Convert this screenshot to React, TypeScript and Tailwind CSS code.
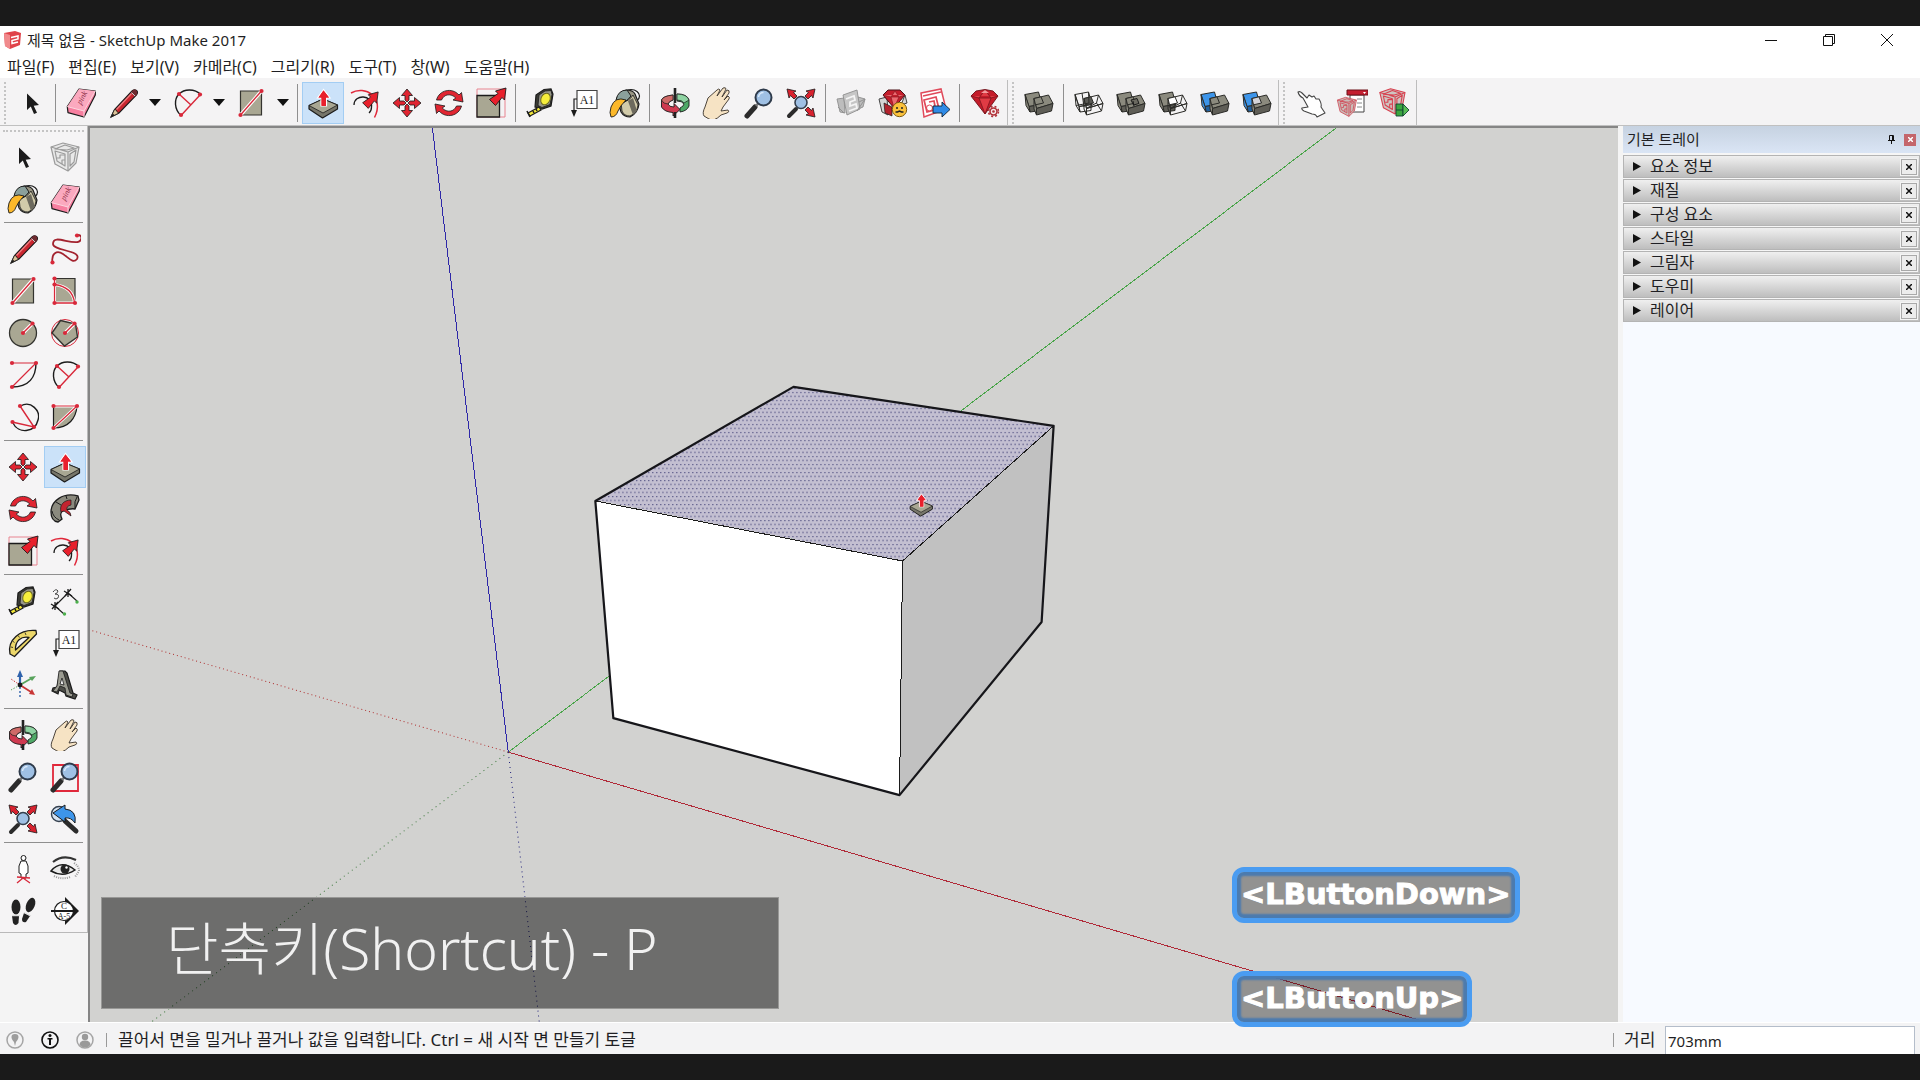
import React, { ReactNode } from "react";

const INK = "#1b1b1b";
const RED = "#d8283a";
const STONE = "#a9a793";
const BLOCK = "#8b8a7e";
const BLUE = "#3d95ea";

const Dot = ({ x, y }: { x: number; y: number }) => <circle cx={x} cy={y} r="2.1" fill={RED} />;

const Magnifier = () => (
  <>
    <path d="M4 29 12 20" stroke="#2b2b2b" strokeWidth="5" strokeLinecap="round" />
    <path d="m13 19 3-3.500" stroke="#777" strokeWidth="2.500" />
    <circle cx="20.500" cy="10.500" r="8" fill="#9fc0e4" stroke="#2e3a4a" strokeWidth="2" />
    <path d="M15.500 10a5 5 0 0 1 5-4.500" stroke="#dbeafa" strokeWidth="1.500" fill="none" />
  </>
);

const FatArrow = () => (
  <path
    d="M31 1 20.500 4l2.500 2.500-8.500 6 6 6 6.500-8 2.500 2.500z"
    fill="#e8202c"
    stroke={INK}
    strokeWidth=".9"
  />
);

interface SolidProps {
  back: string;
  front: string;
  core: string;
}

const Solids = ({ back, front, core }: SolidProps) => {
  const side = (c: string) => (c === "none" ? "none" : c === BLUE ? "#20609f" : "#5f5e57");
  return (
    <g stroke="#2b2b28" strokeWidth="1" strokeLinejoin="round">
      <path d="M2 7.500 15.500 5l3.500 12.500-13 2z" fill={back} />
      <path d="m6 19.500 12-2v6L7 25z" fill={side(back)} />
      <path d="m2 7.500 1 11L7 25l-1-5.500z" fill={back} />
      <path d="M11 11.500 25.500 8l4.500 8.500-16.500 5z" fill={front} />
      <path d="M13.500 21.500 30 16.500 28.500 24l-15 4z" fill={side(front)} />
      <path d="m11 11.500 2.500 10v6.500l-2.500-6z" fill={front} />
      <path d="m11 11.500 7-1.700 2.500 6.200-8 1.800z" fill={core} />
      {front === "none" && <path d="m25.500 8-2 8 5 8M13 21.500l10.500-5.500" fill="none" />}
      {back === "none" && <path d="M3 18.500 16 16l-.5-11M9 6l2 14" fill="none" />}
    </g>
  );
};

const Cube = ({ line, fill }: { line: string; fill: string }) => (
  <g stroke={line} strokeWidth="1.200" strokeLinejoin="round">
    <path d="M2 6 14 2l16 4-3 16-8 8L6 23z" fill={fill} />
    <path d="m2 6 17 5 11-5M19 11v19M6 8l10-4 9 3-7 2zM6 10l10 3v12l-8-5z" fill="none" />
    <path d="M8 17h3v-3h5M13 23v-4h3M21 13l6-4-2 12-4 4z" fill="none" />
  </g>
);

const art: Record<string, ReactNode> = {
  select: <path d="M12 6.500V23l3.800-3.400L19 27l3-1.300-3.300-7L24 18z" fill={INK} />,
  eraser: (
    <>
      <path d="M14 2 30.300 4v4L19 30 3 25.600 2.300 19.600z" fill="#f77fa0" stroke={INK} strokeWidth="1.200" strokeLinejoin="round" />
      <path d="M14 2 30.300 4 19 24 2.300 19.600z" fill="#fba9bf" />
      <path d="M2.300 19.600 19 24 30.300 4M19 24v6" fill="none" stroke="#fbd6df" />
      <text x="16" y="18" fontSize="8" fontStyle="italic" transform="rotate(-62 16 18)" fill="#8d2c44" fontFamily="Liberation Serif">
        pink
      </text>
    </>
  ),
  pencil: (
    <>
      <path d="M4 30 7.500 22.500 25 4q2.500-2 4.500-.5t0 4.500L12 26z" fill="#c9262f" stroke={INK} strokeWidth="1.100" />
      <path d="M4 30 7.500 22.500l1.800.5.700 1.800 2 1.200z" fill="#dcc49a" stroke={INK} strokeWidth=".8" />
      <path d="m4 30 1.800-3.500 1.700 1.800z" fill={INK} />
      <path d="M9.500 22.500 24.500 6.500" stroke="#ef7d7f" strokeWidth="1.200" />
      <path d="m24 5.500 3.800 4L29.500 8q1.500-2.500 0-4.500t-4.500.5z" fill="#6e2b30" />
      <path d="m24.500 5.500 3.500 3.500" stroke="#ccc" />
    </>
  ),
  arc: (
    <>
      <path d="M10 28.500C3 22 3 12 8 7s15-6 22 .5" fill="none" stroke={INK} strokeWidth="1.400" />
      <path d="M10 28.500 29 8M8 7l12 11" stroke={RED} strokeWidth="1.400" />
      <Dot x={10} y={28} /><Dot x={8} y={7} /><Dot x={29} y={7.5} />
    </>
  ),
  arcCenter: (
    <>
      <path d="M29 4C29 18 22 28 5 28" fill="none" stroke={INK} strokeWidth="1.400" />
      <path d="M4 4h25L5 28" fill="none" stroke={RED} strokeWidth="1.200" />
      <Dot x={5} y={4} /><Dot x={29} y={4} /><Dot x={5} y={28} />
    </>
  ),
  arc3: (
    <>
      <path d="M13.500 5C24-1 34 10 31 19c-3 13-20 14-25 3" fill="none" stroke={INK} strokeWidth="1.400" />
      <path d="M13 5 27 26 5 21" fill="none" stroke={RED} strokeWidth="1.400" />
      <Dot x={13} y={5} /><Dot x={27} y={26} /><Dot x={5.5} y={21} />
    </>
  ),
  pie: (
    <>
      <path d="M4.500 5H28C27 17 20 27 4.500 27z" fill={STONE} stroke={INK} strokeWidth="1.200" />
      <path d="M4.500 27 28 5H4.500" fill="none" stroke="#fff" strokeWidth="3" />
      <path d="M4.500 27 28 5H4.500" fill="none" stroke={RED} strokeWidth="1.200" />
      <Dot x={4.5} y={5} /><Dot x={28} y={5} /><Dot x={4.5} y={27} />
    </>
  ),
  rect: (
    <>
      <path d="M5.500 4h21v24h-21z" fill={STONE} stroke="#33332f" strokeWidth="1.200" />
      <path d="m5.500 28 21-24" stroke="#fff" strokeWidth="3.500" />
      <path d="m5.500 28 21-24" stroke={RED} strokeWidth="1.300" />
      <Dot x={5.5} y={28} /><Dot x={26.5} y={4} />
    </>
  ),
  rotRect: (
    <>
      <path d="M5.500 3.500H26V28H5.500z" fill={STONE} stroke="#33332f" strokeWidth="1.200" />
      <path d="M5.500 9.500Q24 12 25.500 28h-20V3.500" fill="none" stroke="#fff" strokeWidth="3" />
      <path d="M5.500 9.500Q24 12 25.500 28h-20V3.500" fill="none" stroke={RED} strokeWidth="1.300" />
      <Dot x={5.5} y={3.5} /><Dot x={5.5} y={9.5} /><Dot x={5.5} y={28} /><Dot x={26} y={28} />
    </>
  ),
  circle: (
    <>
      <circle cx="16" cy="16" r="13.500" fill={STONE} stroke="#33332f" strokeWidth="1.300" />
      <path d="m16 16 9.500-9.500" stroke="#fff" strokeWidth="3.500" />
      <path d="m16 16 9.500-9.500" stroke={RED} strokeWidth="1.400" />
      <Dot x={16} y={16} /><Dot x={25.5} y={6.5} />
    </>
  ),
  polygon: (
    <>
      <circle cx="16" cy="16" r="13.500" fill="none" stroke={RED} />
      <path d="m11.500 3.500 15 3.500 2 13-13 9L3 16z" fill={STONE} stroke="#33332f" strokeWidth="1.400" />
      <path d="m16 16 9.500-9.500" stroke="#fff" strokeWidth="3.500" />
      <path d="m16 16 9.500-9.500" stroke={RED} strokeWidth="1.400" />
      <Dot x={16} y={16} /><Dot x={25.5} y={6.5} />
    </>
  ),
  freehand: (
    <>
      <path
        d="M3.500 29.500C2 20 8 17 14 21s10 10 14 5C33 17 4 18 4 11 4 1 20 11 29 9c5-2 4-7 0-7"
        fill="none"
        stroke="#a3232f"
        strokeWidth="1.800"
      />
      <Dot x={3.5} y={29.5} /><Dot x={28} y={2.5} />
    </>
  ),
  pushPull: (
    <>
      <path d="M2 18.500 16 12l14.500 6v4L15.500 31 2 22z" fill="#77766a" stroke={INK} strokeWidth="1.200" strokeLinejoin="round" />
      <path d="M2 18.500 16 12l14.500 6L16 26z" fill={STONE} stroke={INK} strokeWidth=".8" />
      <path d="M16.500 2.500 10.500 11H14v8h5.500v-8h3.500z" fill="#e8202c" stroke="#fff" strokeWidth="1.200" />
      <path d="M16.500 3.500 11.500 10.500h3V19H19v-8.500h3z" fill="#e8202c" />
    </>
  ),
  offset: (
    <>
      <path d="M2 6C16-2 36 10 25.500 30.500" fill="none" stroke="#e0283a" strokeWidth="1.500" />
      <path d="M5 18C5 7 24 7 22.500 20q0 4-2.500 6" fill="none" stroke={INK} strokeWidth="1.300" />
      <g transform="translate(0 4) scale(.94)"><FatArrow /></g>
    </>
  ),
  move: (
    <path
      d="m16 2 5.500 6.500H18V13l-2 2-2-2V8.500h-3.500zM30 16l-6.500 5.500V18H19l-2-2 2-2h4.500v-3.500zM16 30l-5.500-6.500H14V19l2-2 2 2v4.500h3.500zM2 16l6.500-5.500V14H13l2 2-2 2H8.500v3.500z"
      fill="#e02531"
      stroke={INK}
      strokeWidth=".8"
    />
  ),
  rotate: (
    <g fill="#e02531" stroke={INK} strokeWidth=".8" strokeLinejoin="round">
      <path d="M3.500 13C6 3 19 0 26 8l2.500-2.500L30 15l-10-2 2.800-2C18 6 11 7 8.500 13z" />
      <path d="M28.500 19C26 29 13 32 6 24l-2.500 2.500L2 17l10 2-2.800 2c4.800 5 11.800 4 14.300-2z" />
    </g>
  ),
  scale: (
    <>
      <path d="M2 2h28v28H2z" fill="none" stroke="#e88490" />
      <path d="M2 8.500h22.500V30H2z" fill={STONE} stroke={INK} strokeWidth="1.300" />
      <FatArrow />
    </>
  ),
  followMe: (
    <>
      <path d="M29 3C14-1 2 8 2 19q0 9 7 10l4-3q-3-6 1-8 8-3 12-2l4-9z" fill="#8b8a7e" stroke={INK} strokeWidth="1.300" />
      <path d="M3 18q1 6 7 9M7 9l5 3M17 3l1 3M28 4q-3 4-2 11" stroke={INK} fill="none" />
      <path d="M22 7C15 7 10 12 12 19l3-1 7 5q0-4-4-6-1-4 4-5z" fill="#c3242f" stroke={INK} strokeWidth=".7" />
    </>
  ),
  tape: (
    <>
      <path d="m11 8 8-5.500L26 2l2 5-2 12-9 3-7-2z" fill="#3a3a34" stroke={INK} strokeWidth="1.200" />
      <path d="m14 8 6-4 6-.5 1 4-2 10-8 3-4-2z" fill="#97968b" stroke={INK} strokeWidth=".8" />
      <ellipse cx="20.500" cy="12" rx="4.500" ry="6" transform="rotate(25 20.500 12)" fill="#f6ee3c" stroke="#6b6820" />
      <path d="m3 26 11-6 2 3-11 6z" fill="#f2e838" stroke={INK} strokeWidth="1.200" />
      <path d="m2 24 3 6M8 24l1 2M11 22l1 2" stroke={INK} strokeWidth="1.600" />
    </>
  ),
  text: (
    <>
      <path d="M10 3.500h20v18H10z" fill="#fff" stroke="#444" strokeWidth="1.200" />
      <path d="M10 12H7v13" fill="none" stroke={INK} strokeWidth="1.200" />
      <path d="M4 23h6l-3 7z" fill={INK} />
      <text x="20" y="16.500" fontSize="12" textAnchor="middle" fill="#222" fontFamily="Liberation Serif">A1</text>
    </>
  ),
  paint: (
    <>
      <ellipse cx="22" cy="9" rx="8.500" ry="6.500" fill="none" stroke={INK} strokeWidth="1.200" />
      <path d="m8 11 9-8q7 0 9 4l4 10q-1 9-9 13-6 0-9-5z" fill="#9a9684" stroke={INK} strokeWidth="1.200" />
      <path d="M12 15q8 0 12-7l5 10q-1 8-8 11-6 0-8-5z" fill="#d2cbaa" stroke={INK} strokeWidth=".8" />
      <path d="m19 14 5 14 4-4-4-13z" fill="#6d6a5e" />
      <path d="M7 13q2-10 11-10l4 6q-6 8-12 7z" fill="#8ba09c" stroke={INK} />
      <path d="M17 13Q6 9 2 20q-2 6 0 10 5 0 7-6 2-5 8-11z" fill="#fcb82a" stroke={INK} strokeWidth=".9" />
    </>
  ),
  dimension: (
    <>
      <path d="m6 21 13-13M6 21l9 8M19 8l9 8" stroke={INK} fill="none" strokeWidth="1.100" />
      <path d="m2 19 8 5M3 24l6-7M6 17v8M15 6l8 5M16 11l6-7M19 4v8" stroke={INK} strokeWidth="1.300" />
      <circle cx="15.500" cy="29" r="1.700" fill="#4cb04c" /><circle cx="28" cy="17" r="1.700" fill="#4cb04c" />
      <path d="M4 7q3-4 5-1-1 3-3 3 5 0 3 4-2 2-4 0" fill="none" stroke="#444" />
    </>
  ),
  protractor: (
    <>
      <path
        fillRule="evenodd"
        d="M29 3.500C13 2 0 13 3 27l4.500 2.500L29.500 7zM22 10.500C14 9 8 14 8.500 23z"
        fill="#ecd76a"
        stroke={INK}
        strokeWidth="1.300"
        strokeLinejoin="round"
      />
      <path d="m4 20 2 .5M5.500 14l2 1.500M11 8.500l1.500 2M18 5.500l1 2.500" stroke={INK} strokeWidth=".8" />
    </>
  ),
  axes: (
    <>
      <path d="m13 16 12-7" stroke="#58a35c" strokeWidth="1.800" /><path d="m29 7-7 1 3 4z" fill="#58a35c" />
      <path d="m13 16 11 7" stroke="#c83636" strokeWidth="1.800" /><path d="m28 26-6-1 3-5z" fill="#c83636" />
      <path d="M13 16V6" stroke="#2f62ac" strokeWidth="2.200" /><path d="m13 1-3 7h6z" fill="#2f62ac" />
      <path d="m13 16-9-6" stroke="#c83636" strokeDasharray="1.500 1.500" />
      <path d="m13 16-9 5" stroke="#58a35c" strokeDasharray="1.500 1.500" />
      <path d="M13 18v10" stroke="#2f62ac" strokeWidth="1.400" strokeDasharray="2 2" />
      <circle cx="13" cy="16" r="2.400" fill={INK} />
    </>
  ),
  text3d: (
    <>
      <path d="M11 2h5l2 2 6 20 4 2-2 4-9-3-1-3-6-3-1 4-6-3 1-3 4-1z" fill="#4d4d48" stroke={INK} strokeWidth="1.200" />
      <path d="M10 2h4l7 22 3 1-1 3-6-2-1-7-5-2-3 6-4-1 4-5z" fill="#9a9a90" stroke={INK} strokeWidth=".8" />
      <path d="m13 9 2 7-4-1z" fill="#f4f3f4" stroke={INK} strokeWidth=".8" />
    </>
  ),
  orbit: (
    <>
      <path d="M14 8Q4 9 2.500 13v7q3 5 11.500 5.500V29l7-6.500-6-6V20q-5 0-6-3 1-3 5-4z" fill="#cf3a50" stroke={INK} strokeWidth=".9" />
      <path d="M14 8Q4 9 2.500 13q1.500 4 6.500 4 1-3 5-4z" fill="#cf6a68" stroke={INK} strokeWidth=".7" />
      <path d="M18 7q10 0 12 6v6q-2 5-9 6v-4q4-2 4-4-2-3-7-3z" fill="#4fa867" stroke={INK} strokeWidth=".9" />
      <path d="M18 7q10 0 12 6l-5 3q-2-3-7-3z" fill="#8ed3a2" stroke={INK} strokeWidth=".7" />
      <path d="M16 1v15M16 25v6" stroke="#222" strokeWidth="2.600" />
    </>
  ),
  pan: (
    <path
      d="M3 30q-2-3 1-9l3-9L16 4q2-2 3 0l-3 6 6-8q3-1 3 1l-4 8 5-7q3 0 2 3l-5 7 4-4q2 1 1 3l-6 8-2 4 7-1q2 2-1 3l-6 2q-7 7-12 4z"
      transform="translate(0 -1)"
      fill="#f6e3c4"
      stroke="#3a322a"
      strokeWidth=".9"
      strokeLinejoin="round"
    />
  ),
  zoom: <Magnifier />,
  zoomWindow: (
    <>
      <path d="M4 4h25v26H4z" fill="none" stroke="#e0283a" strokeWidth="1.800" />
      <Magnifier />
    </>
  ),
  zoomExtents: (
    <>
      <path d="m4 29 7-7" stroke="#2b2b2b" strokeWidth="4" strokeLinecap="round" />
      <circle cx="16" cy="15.500" r="6" fill="#9fc0e4" stroke="#35404e" strokeWidth="1.600" />
      <g fill="#d8222f" stroke={INK} strokeWidth=".8">
        <path d="m2 2 9 2-2.500 1.500L12 9l-3 3-3.500-3.500L4 11z" />
        <path d="m30 2-9 2 2.500 1.500L20 9l3 3 3.500-3.500L28 11z" />
        <path d="m30 30-9-2 2.500-1.500L20 23l3-3 3.500 3.500L28 21z" />
      </g>
    </>
  ),
  previous: (
    <>
      <circle cx="10" cy="11" r="7.500" fill="#d4e2f2" stroke="#35404e" strokeWidth="1.400" />
      <path d="m16 18 11 10" stroke="#2b2b2b" strokeWidth="5" strokeLinecap="round" />
      <path d="m4 10 12-8v4q12 1 10 14-4-6-10-5v4z" fill="#3d95ea" stroke={INK} />
    </>
  ),
  camera: (
    <>
      <circle cx="16.500" cy="5" r="2.500" fill="#fff" stroke={INK} />
      <path d="M14 8h5l2 5v7l-2 1v4h-5v-4l-2-1v-7z" fill="#fff" stroke={INK} />
      <path d="m10 30 6-5 7 5M10 24l13 1" fill="none" stroke={RED} strokeWidth="1.300" />
    </>
  ),
  look: (
    <>
      <path d="M4 9Q14 1 27 7" fill="none" stroke="#333" strokeWidth="2.200" />
      <path d="M2 18q10-12 24-1-12 8-24 1z" fill="#e8e8e8" stroke={INK} strokeWidth="1.500" />
      <circle cx="16" cy="16" r="4.500" fill="#222" /><circle cx="17.500" cy="14.500" r="1.200" fill="#fff" />
      <path d="M25 10q5 3 5 8l-4 6M5 23q8 4 16 1" fill="none" stroke="#999" strokeDasharray="1 1.200" strokeWidth="2" />
    </>
  ),
  walk: (
    <g fill="#222">
      <ellipse cx="9" cy="12" rx="4.500" ry="7.500" /><path d="M5 21h7l-.5 7q-3 4-5.500 0z" />
      <ellipse cx="23.500" cy="10" rx="4.300" ry="7.500" transform="rotate(22 23.500 10)" />
      <path d="m17 18 6 3-4 6q-4 1-4-3z" />
      <path d="M5 20.500h8M17 17.500l7 3.500" stroke="#ddd" strokeWidth="1.300" />
    </g>
  ),
  section: (
    <>
      <path d="m16 2 14 14-14 14z" fill={INK} />
      <circle cx="15" cy="16" r="9.500" fill="#fff" stroke={INK} strokeWidth="1.200" />
      <path d="M2 16h26" stroke={INK} strokeWidth="2" />
      <text x="15" y="14" fontSize="9" textAnchor="middle" fill={INK} fontFamily="Liberation Serif">C</text>
      <text x="15" y="24" fontSize="8" textAnchor="middle" fill={INK} fontFamily="Liberation Serif">A-5</text>
    </>
  ),
  component: <Cube line="#9b9b9b" fill="#e9e9e9" />,
  warehouse: (
    <g stroke="#8f8f8f" strokeWidth=".9">
      <path d="m2 12 7-1 1 15-5-1zM30 12l-7-2v12l5-2z" fill="#bdbdbd" />
      <path d="m8 8 14-5 3 19-13 6z" fill="#c6c6c6" />
      <path d="m11 12 8-3 1 4-5 2v4l6-2 1 4-8 3" fill="none" stroke="#f4f4f4" strokeWidth="1.800" />
      <path d="m3 20 6 6M22 24l8-12-6 3" />
    </g>
  ),
  extensions: (
    <>
      <path d="m2 12 8-2 1 18-6-3zM28 8l2 8-6 2z" fill="#d5d5d5" stroke="#444" />
      <path d="m6 8 5-5h12l5 5-11 13z" fill="#c41e2c" stroke="#4b1016" />
      <path d="m6 8 8 2 4-6 4 6 6-2M14 10l3 11 5-11z" fill="#ec6a70" stroke="#8d1721" strokeWidth=".7" />
      <path d="m7 16 8 4v9l-7-3z" fill="#b3222d" stroke={INK} strokeWidth=".7" />
      <circle cx="22.500" cy="22.500" r="7.200" fill="#fcc23b" stroke="#7a5a10" />
      <path d="M20 20v2M25 20v2M18.500 25h2l2-1 2 1h2" stroke="#222" strokeWidth="1.500" fill="none" />
    </>
  ),
  layout: (
    <>
      <path d="m2 6 20-4 5 20-22 8z" fill="#fff" stroke="#e0495a" strokeWidth="1.500" />
      <path d="m4 9 18-4M5 13l12-3 3 12-12 3zM10 15l5-1 1 5" fill="none" stroke="#e0495a" strokeWidth="1.700" />
      <circle cx="10.500" cy="21" r="3" fill="none" stroke="#e0495a" />
      <path d="M14 19h9v-4l8 7.500L23 30v-4h-9z" fill="#2f8ae6" stroke="#123" strokeWidth=".9" />
    </>
  ),
  ruby: (
    <>
      <path d="m2 9 5-5 9-1.500L24 4l5 5-13 18z" fill="#c41c2a" stroke="#6d1019" strokeWidth=".9" />
      <path d="m2 9 8 2 6-8 6 8 7-2M10 11h12l-6 16z" fill="#e03b44" stroke="#7d141d" strokeWidth=".8" />
      <path d="m12 6 4-3 4 3z" fill="#f39a9c" />
      <circle cx="24.500" cy="24.500" r="3.500" fill="#f6e6e7" stroke="#b03038" strokeWidth="1.600" />
      <circle cx="24.500" cy="24.500" r="5" fill="none" stroke="#b03038" strokeWidth="1.500" strokeDasharray="2 2" />
      <circle cx="24.500" cy="24.500" r="1.300" fill="#b03038" />
    </>
  ),
  outer: <Solids back={BLOCK} front={BLOCK} core={BLOCK} />,
  intersect: <Solids back="none" front="none" core="#5a5a55" />,
  union: (
    <>
      <Solids back={BLOCK} front={BLOCK} core={BLOCK} />
      <path d="m16 13 6-1.500 2 5-5.500 1.500zM18 14l1 5" stroke={INK} fill="#6b6a61" />
    </>
  ),
  subtract: <Solids back={BLOCK} front="none" core="#fff" />,
  trim: <Solids back={BLUE} front={BLOCK} core={BLOCK} />,
  split: <Solids back={BLUE} front={BLOCK} core="#d4d4d8" />,
  interact: (
    <path
      d="M4 5q2-1 4 1l5 5 2-3 3 2 2-1 2 3 3 0q3 5 2 8l4 6-8 4q-1-3-5-3l-8-3q-3-2-2-3l6-1-5-9q-4-2-5-6z"
      fill="#fff"
      stroke="#444"
      strokeWidth="1.100"
      strokeLinejoin="round"
    />
  ),
  options: (
    <>
      <path d="M14 8h14v17H14z" fill="#fff" stroke="#444" />
      <path d="M21 12h5M21 16h5M21 20h5" stroke="#888" />
      <path d="M11 3h21v5H11z" fill="#c31f30" stroke="#6d1019" />
      <path d="m27 5 3 0-1.500 2z" fill="#fff" />
      <g transform="translate(0 9) scale(.68)"><Cube line="#d24a58" fill="#c9bcb8" /></g>
    </>
  ),
  attributes: (
    <>
      <g transform="scale(.9)"><Cube line="#d8404f" fill="#cfc4c1" /></g>
      <path d="M18 17h7v12h-7z" fill="#3ba63f" stroke="#143" strokeWidth=".9" />
      <path d="M18 23h7M25 17l6 6-6 6z" fill="#57bd55" stroke="#143" strokeWidth=".9" />
    </>
  ),
};

const Tool = ({ name, active = false }: { name: string; active?: boolean }) => (
  <button
    type="button"
    aria-label={name}
    aria-pressed={active}
    className={`flex size-[42px] shrink-0 items-center justify-center border ${
      active ? "border-[#a3cdf3] bg-[#cbe2f9]" : "border-transparent"
    }`}
  >
    <svg viewBox="0 0 32 32" className="size-8" fill="none">{art[name]}</svg>
  </button>
);

const SplitTool = ({ name }: { name: string }) => (
  <div className="flex w-16 shrink-0 items-center">
    <Tool name={name} />
    <button type="button" aria-label={`${name} menu`} className="flex h-10 w-6 items-center justify-center">
      <svg viewBox="0 0 12 7" className="h-[7px] w-3"><path d="M0 0h12L6 7z" fill="#111" /></svg>
    </button>
  </div>
);

const Divider = () => <div className="mr-1 ml-[3px] h-[38px] w-px shrink-0 bg-[#8f8f8f]" />;
const Grip = () => <div className="mx-1 h-[42px] w-0 shrink-0 border-l-2 border-dotted border-[#c4c4c4]" />;

const menus = ["파일(F)", "편집(E)", "보기(V)", "카메라(C)", "그리기(R)", "도구(T)", "창(W)", "도움말(H)"];
const trays = ["요소 정보", "재질", "구성 요소", "스타일", "그림자", "도우미", "레이어"];

const palette = [
  ["select", "component", "paint", "eraser"],
  ["pencil", "freehand", "rect", "rotRect", "circle", "polygon", "arcCenter", "arc", "arc3", "pie"],
  ["move", "pushPull", "rotate", "followMe", "scale", "offset"],
  ["tape", "dimension", "protractor", "text", "axes", "text3d"],
  ["orbit", "pan", "zoom", "zoomWindow", "zoomExtents", "previous"],
  ["camera", "look", "walk", "section"],
];

const TitleBar = () => (
  <header className="bg-white">
    <div className="flex h-7 items-center pl-1">
      <svg viewBox="0 0 18 20" className="mr-[5px] h-5 w-[18px]">
        <path d="M0 3 11 1l6 2-1 12-10 4-5-3z" fill="#e0434a" />
        <path d="m0 3 6 2v14l-5-3z" fill="#f08a8c" />
        <path d="M7 7.500 14 6v3L8 10.500v3l6-1.500" stroke="#fff" strokeWidth="1.500" fill="none" />
      </svg>
      <h1 className="text-[15px]">제목 없음 - SketchUp Make 2017</h1>
      <div className="ml-auto flex text-[#111]">
        <button type="button" aria-label="Minimize" className="flex h-7 w-[58px] items-center justify-center">
          <svg viewBox="0 0 12 12" className="size-3"><path d="M0 6.500h12" stroke="currentColor" /></svg>
        </button>
        <button type="button" aria-label="Restore" className="flex h-7 w-[58px] items-center justify-center">
          <svg viewBox="0 0 12 12" className="size-3" fill="none" stroke="currentColor">
            <path d="M.5 2.500h9v9h-9zM2.500 2.500v-2h9v9h-2" />
          </svg>
        </button>
        <button type="button" aria-label="Close" className="mr-1 flex h-7 w-[58px] items-center justify-center">
          <svg viewBox="0 0 12 12" className="size-3"><path d="m0 0 12 12M12 0 0 12" stroke="currentColor" /></svg>
        </button>
      </div>
    </div>
    <nav className="flex h-6 items-center gap-[14px] pt-[2px] pl-[7px] text-base">
      {menus.map((m) => (
        <button type="button" key={m}>{m}</button>
      ))}
    </nav>
  </header>
);

const TopBar = () => (
  <div className="flex h-12 items-center border-b border-[#c0c0c0] bg-[#f4f3f4] pt-[2px]">
    <div className="flex h-full items-center border-r border-[#bdbdbd] pr-px">
      <Grip />
      <Tool name="select" />
      <Divider />
      <Tool name="eraser" />
      <SplitTool name="pencil" />
      <SplitTool name="arc" />
      <SplitTool name="rect" />
      <Divider />
      <Tool name="pushPull" active />
      {["offset", "move", "rotate", "scale"].map((n) => <Tool key={n} name={n} />)}
      <Divider />
      {["tape", "text", "paint"].map((n) => <Tool key={n} name={n} />)}
      <Divider />
      {["orbit", "pan", "zoom", "zoomExtents"].map((n) => <Tool key={n} name={n} />)}
      <Divider />
      {["warehouse", "extensions", "layout"].map((n) => <Tool key={n} name={n} />)}
      <Divider />
      <Tool name="ruby" />
    </div>
    <div className="flex h-full items-center border-r border-[#bdbdbd]">
      <Grip />
      <Tool name="outer" />
      <Divider />
      {["intersect", "union", "subtract", "trim", "split"].map((n) => <Tool key={n} name={n} />)}
    </div>
    <div className="flex h-full items-center border-r border-[#bdbdbd] pr-px">
      <Grip />
      {["interact", "options", "attributes"].map((n) => <Tool key={n} name={n} />)}
    </div>
  </div>
);

const Palette = () => (
  <aside className="w-[88px] shrink-0 bg-[#f4f4f4]">
    <div className="border-r border-b border-[#b9b9b9] bg-[#f5f4f5] px-[2px] pt-1">
      <div className="mx-px mb-1 h-[2px] border-t-2 border-dotted border-[#c4c4c4]" />
      {palette.map((group, i) => (
        <div key={group[0]}>
          {i > 0 && <div className="mx-[2px] mt-[2px] mb-[5px] h-px bg-[#8f8f8f]" />}
          <div className="grid grid-cols-[42px_42px]">
            {group.map((n) => <Tool key={n} name={n} active={n === "pushPull"} />)}
          </div>
        </div>
      ))}
    </div>
  </aside>
);

const Key = ({ children }: { children: ReactNode }) => (
  <kbd className="flex h-14 items-center rounded-xl border-[5px] border-[#4a9cf1] bg-black/30 px-1 pb-[2px] font-['DejaVu_Sans',sans-serif] text-[29px] leading-8 font-bold text-white shadow-[inset_0_0_2px_4px_#4b7baf] [-webkit-text-stroke:1px_white]">
    {children}
  </kbd>
);

const Model = () => (
  <svg viewBox="90 128 1527 894" preserveAspectRatio="xMidYMid slice" className="absolute inset-0 size-full" fill="none">
    <defs>
      <pattern id="hatch" width="4" height="8" patternUnits="userSpaceOnUse">
        <path d="M0 0h1v1H0zM2 4h1v1H2z" fill="#2c2c68" />
      </pattern>
    </defs>
    <g shapeRendering="crispEdges">
      <path d="M508 752 1337 127" stroke="#4aa54a" />
      <path d="M508 752 432 127" stroke="#2f28a8" />
      <path d="m508 752 918 270" stroke="#b02a38" />
    </g>
    <path d="M508 752 90 630" stroke="#b03030" strokeDasharray="1 3" />
    <path d="m508 752-357 270" stroke="#3f7a3f" strokeDasharray="1 4" />
    <path d="m508 752 31 270" stroke="#22227c" strokeDasharray="1 4" />
    <path d="m793 387 261 39-151 135-307-61z" fill="#c3bfd1" />
    <path d="m793 387 261 39-151 135-307-61z" fill="url(#hatch)" />
    <path d="m595 501 307 60-3 234-286-77z" fill="#fff" />
    <path d="m902 561 151-135-12 196-142 173z" fill="#c1c1c1" />
    <path d="m595 501 307 60 151-135M902 561l-3 234" stroke={INK} shapeRendering="crispEdges" />
    <path d="m793 387 260 39-12 196-142 173-286-77-18-217z" stroke="#16161a" strokeWidth="2.200" strokeLinejoin="round" />
    <svg x="908" y="492" width="25" height="25" viewBox="0 0 32 32">{art.pushPull}</svg>
  </svg>
);

const Viewport = () => (
  <main className="relative min-h-[896px] flex-1 border-t-2 border-l-2 border-[#858585] bg-[#d2d2d0]">
    <div className="absolute inset-0 overflow-hidden">
      <Model />
    </div>
    <div className="absolute bottom-[13px] left-[11px] flex h-28 w-[678px] items-center border border-[#989896] bg-black/48 pb-2 pl-16 text-[57px] font-light whitespace-nowrap text-[#f1f1f1]">
      단축키(Shortcut) - P
    </div>
    <div className="absolute right-24 -bottom-[5px] z-10 flex w-[290px] flex-col items-start gap-12">
      <Key>&lt;LButtonDown&gt;</Key>
      <Key>&lt;LButtonUp&gt;</Key>
    </div>
  </main>
);

const Tray = () => (
  <aside className="ml-[5px] flex w-[297px] shrink-0 flex-col bg-[#f7faff]">
    <div className="flex h-[27px] items-center bg-linear-to-b from-[#c6d2e1] to-[#dae5f5] pr-1 pl-1">
      <h2 className="text-[15px]">기본 트레이</h2>
      <button type="button" aria-label="Pin" className="mr-2 ml-auto">
        <svg viewBox="0 0 8 9" className="h-[9px] w-2" fill="none" stroke="#111">
          <path d="M1.500 5.500v-5h4v5M0 5.500h7M3.500 5.500V9M4.500.5v5" />
        </svg>
      </button>
      <button type="button" aria-label="Close tray" className="flex size-3 items-center justify-center bg-[#c4666c]">
        <svg viewBox="0 0 5 5" className="size-[5px]"><path d="m0 0 5 5M5 0 0 5" stroke="#fff" strokeWidth="1.500" /></svg>
      </button>
    </div>
    <ul className="flex flex-col gap-px bg-[#f6f6f6] pt-[2px]">
      {trays.map((t) => (
        <li key={t} className="flex h-[23px] items-center border border-[#b4b4b4] bg-linear-to-b from-[#f0f0f0] to-[#bebebe] pr-[2px] pl-[9px]">
          <button type="button" className="flex flex-1 items-center gap-[9px] text-left text-base leading-5">
            <svg viewBox="0 0 8 9" className="h-[9px] w-2"><path d="M0 0v9l8-4.500z" fill="#111" /></svg>
            <span className="pb-px leading-[19px]">{t}</span>
          </button>
          <button type="button" aria-label={`${t} 닫기`} className="flex size-4 items-center justify-center border border-[#a9a9a9] bg-[#ececec] outline outline-[#f4f4f4]">
            <svg viewBox="0 0 6 6" className="size-[6px]"><path d="m0 0 6 6M6 0 0 6" stroke="#111" strokeWidth="1.500" /></svg>
          </button>
        </li>
      ))}
    </ul>
  </aside>
);

const StatusBar = () => (
  <footer className="flex h-8 items-center border-t border-white bg-[#f3f3f4] pt-[2px] pr-[5px] pl-[6px] text-[15px]">
    <div className="flex gap-[17px]">
      <svg viewBox="0 0 18 18" className="size-[18px]" fill="none">
        <circle cx="9" cy="9" r="8" stroke="#a5a5a5" strokeWidth="1.500" />
        <path d="M9 3c5 0 4 5 1 8l-1 4-1-4C5 8 4 3 9 3z" fill="#9d9d9d" />
      </svg>
      <svg viewBox="0 0 18 18" className="size-[18px]" fill="none">
        <circle cx="9" cy="9" r="8" stroke="#111" strokeWidth="1.600" />
        <circle cx="9" cy="4.500" r="1.500" fill="#111" />
        <path d="M6.500 7h5v1.500H10V14H8V8.500H6.500z" fill="#111" />
      </svg>
      <svg viewBox="0 0 18 18" className="size-[18px]" fill="none">
        <circle cx="9" cy="9" r="8" stroke="#a5a5a5" strokeWidth="1.500" />
        <circle cx="9" cy="6" r="3.200" fill="#999" />
        <path d="M3.500 14q0-4.500 5.500-4.500t5.500 4.500Q9 19 3.500 14z" fill="#999" />
      </svg>
    </div>
    <div className="mr-[11px] ml-3 h-[14px] w-px bg-[#999]" />
    <p className="text-[17px]">끌어서 면을 밀거나 끌거나 값을 입력합니다. Ctrl = 새 시작 면 만들기 토글</p>
    <div className="mr-[10px] ml-auto h-[14px] w-px bg-[#999]" />
    <label htmlFor="distance" className="w-[41px] text-[17px]">거리</label>
    <input
      id="distance"
      defaultValue="703mm"
      className="h-7 w-[250px] self-end border border-b-0 border-[#b4bdca] bg-white px-[2px]"
    />
  </footer>
);

const App = () => (
  <div className="flex min-h-screen flex-col bg-[#1a1a1a] py-[26px] font-['Noto_Sans','Noto_Sans_CJK_KR',sans-serif] text-[#1f1f24]">
    <TitleBar />
    <TopBar />
    <div className="flex flex-1 bg-[#f4f4f4]">
      <Palette />
      <Viewport />
      <Tray />
    </div>
    <StatusBar />
  </div>
);

export default App;
